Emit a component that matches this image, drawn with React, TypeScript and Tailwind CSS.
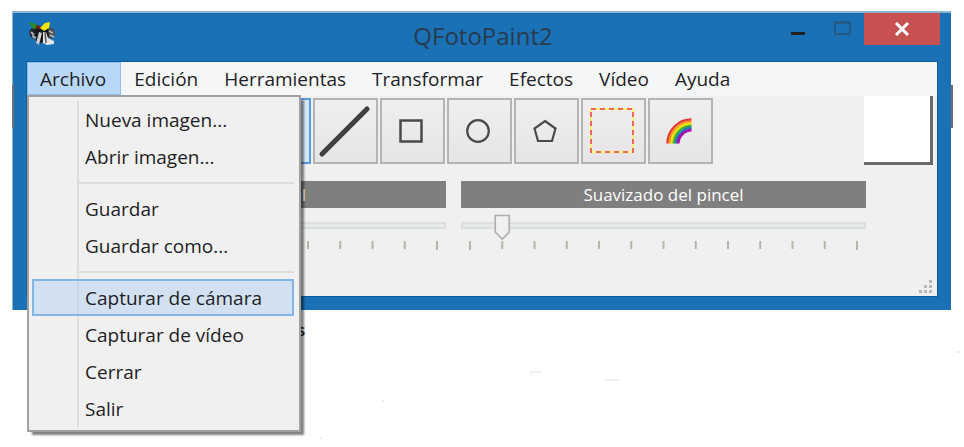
import { useState } from "react";
import type { ReactNode } from "react";

const menus = ["Edición", "Herramientas", "Transformar", "Efectos", "Vídeo", "Ayuda"];

const fileGroups = [
  ["Nueva imagen...", "Abrir imagen..."],
  ["Guardar", "Guardar como..."],
  ["Capturar de cámara", "Capturar de vídeo", "Cerrar", "Salir"],
];

function AppIcon() {
  return (
    <svg width="28" height="28" viewBox="0 0 28 28" aria-hidden="true">
      <ellipse cx="6" cy="12" rx="4.5" ry="5.5" fill="#20242a" />
      <ellipse cx="22" cy="12" rx="5" ry="5.5" fill="#4b4f55" />
      <path d="M8 7 L20 7 L21 15 L16 20 L10 24 L7 17 Z" fill="#15171a" />
      <path d="M11 11 L8 22 L11 24 L14 12 Z" fill="#c9ccd0" />
      <path d="M15 11 L15 22 L19 24 L26 23 L26 20 L20 17 L18 11 Z" fill="#e3e3e3" />
      <path d="M17 11 L18 22" stroke="#555" strokeWidth="1.5" />
      <path d="M3 11 L6 14 M4 15 L8 17" stroke="#a9adb2" strokeWidth="2" />
      <path d="M21 10 L25 12 M22 14 L26 16" stroke="#b5b8bc" strokeWidth="1.5" />
      <path d="M1 1 L8 3 L10 7 L5 8 Z" fill="#2f8a22" />
      <path d="M8 4 L13 5 L12 8 L8 7 Z" fill="#7a2018" />
      <path d="M12 7 L17 2 L22 1 L21 7 L16 10 Z" fill="#f2e50c" />
    </svg>
  );
}

function Tool({ label, active = false, children }: { label: string; active?: boolean; children?: ReactNode }) {
  return (
    <button
      type="button"
      aria-label={label}
      className={
        active
          ? "flex h-[66px] w-[65px] shrink-0 items-center justify-center border-2 border-[#569de5] bg-[#d5e8fa]"
          : "flex h-[66px] w-[65px] shrink-0 items-center justify-center border-2 border-[#b4b4b4] bg-linear-to-b from-[#efefef] to-[#e5e5e5] pr-[3px]"
      }
    >
      {children}
    </button>
  );
}

function BrushSlider({ id, label, initial }: { id: string; label: string; initial: number }) {
  const [value, setValue] = useState(initial);
  const ticks = Array.from({ length: 13 }, (_, i) => i);
  const at = (i: number) => 9 + (i * 387) / 12;
  return (
    <div className="w-[405px] shrink-0">
      <label htmlFor={id} className="block h-[27px] bg-[#7f7f7f] text-center text-[17px] leading-[27px] text-white">
        {label}
      </label>
      <div className="relative h-[44px]">
        <svg width="405" height="44" viewBox="0 0 405 44" aria-hidden="true">
          <rect x="1" y="15" width="403" height="5" fill="#e7eaea" stroke="#d6dada" strokeWidth="1.5" />
          {ticks.map((i) => (
            <rect key={i} x={at(i) - 1} y="33" width="2" height={i === 0 || i === 12 ? 9 : 8} fill="#b5b5ab" />
          ))}
          <path
            d="M-7 7.5 H7 V24 L0 31 L-7 24 Z"
            transform={`translate(${at(value)} 0)`}
            fill="#f0f0f0"
            stroke="#acacac"
            strokeWidth="1.6"
          />
        </svg>
        <input
          id={id}
          type="range"
          min={0}
          max={12}
          value={value}
          onChange={(e) => setValue(Number(e.target.value))}
          className="absolute inset-0 h-full w-full opacity-0"
        />
      </div>
    </div>
  );
}

function FileMenu() {
  return (
    <div
      role="menu"
      className="absolute top-[33px] left-0 z-10 w-[274px] border-2 border-[#a0a0a0] bg-[#f0f0f0] pt-1 pr-[5px] pb-[3px] pl-[3px] shadow-[4px_4px_2px_-1px_rgba(0,0,0,0.5)]"
    >
      <div className="relative">
        <div className="absolute inset-y-0 left-[45px] w-[2px] bg-[#dedede]" />
        {fileGroups.map((group, g) => (
          <div key={group[0]} className="relative">
            {g > 0 && (
              <div className="flex h-[15px] items-center pl-[47px]">
                <div className="h-[2px] w-full bg-[#dcdcdc]" />
              </div>
            )}
            {group.map((item) => (
              <button
                key={item}
                type="button"
                role="menuitem"
                className={
                  item === "Capturar de cámara"
                    ? "block h-[37px] w-full border-2 border-[#84b5ea] bg-[#8dc0f7]/30 pl-[51px] text-left leading-[34px]"
                    : "block h-[37px] w-full border-2 border-transparent pl-[51px] text-left leading-[34px]"
                }
              >
                {item}
              </button>
            ))}
          </div>
        ))}
      </div>
    </div>
  );
}

export default function App() {
  return (
    <main className="relative min-h-[447px] overflow-hidden bg-white pt-[11px] pr-[13px] pl-[12px] font-['Open_Sans','Noto_Sans',sans-serif] text-[19px] text-[#1e1e24]">
      <div className="relative border-t-2 border-l border-[#8fb4cf] bg-[#1a71b6]">
        <div className="absolute top-[72px] -right-[2px] h-[43px] w-[2px] bg-[#6d7177]" />
        <div className="absolute top-[72px] -left-[1px] h-[43px] w-[2px] bg-[#6d7177]" />
        <header className="flex h-[49px] items-start pr-[11px] pl-[15px]">
          <div className="w-[162px] pt-2">
            <AppIcon />
          </div>
          <h1 className="flex-1 text-center text-[24px] leading-[46px] text-[#283b4d]">QFotoPaint2</h1>
          <div className="flex h-8 w-[164px] justify-end">
            <button type="button" aria-label="Minimizar" className="flex w-[44px] items-end justify-center pb-[10px]">
              <span className="h-[3px] w-[14px] bg-[#222]" />
            </button>
            <button type="button" aria-label="Maximizar" className="flex w-[44px] items-center justify-center pb-[2px]">
              <span className="h-[14px] w-[17px] border-2 border-t-3 border-[#235a86]" />
            </button>
            <button type="button" aria-label="Cerrar ventana" className="flex w-[76px] items-center justify-center bg-[#c75050]">
              <svg width="16" height="14" viewBox="0 0 16 14" aria-hidden="true">
                <path d="M2 1 L14 13 M14 1 L2 13" stroke="#fff" strokeWidth="3" />
              </svg>
            </button>
          </div>
        </header>

        <div className="px-[14px] pb-[14px]">
          <div className="bg-[#f0f0f0] outline outline-[#0d5c9e]">
            <nav className="flex h-[34px] bg-[#f5f6f7]">
              <div className="relative">
                <button
                  type="button"
                  aria-haspopup="menu"
                  aria-expanded="true"
                  className="h-[33px] border border-[#8cc0f5] bg-[#b8d8f9] pt-[2px] pr-[14px] pl-3"
                >
                  Archivo
                </button>
                <FileMenu />
              </div>
              {menus.map((m) => (
                <button key={m} type="button" className="h-[33px] px-[13px] pt-[2px]">
                  {m}
                </button>
              ))}
            </nav>

            <div className="flex items-start justify-between pr-[4px] pl-[18px]">
              <div className="flex gap-[2px] pt-[2px]">
                <Tool label="Mover" />
                <Tool label="Punto" />
                <Tool label="Lápiz" />
                <Tool label="Pincel" active />
                <Tool label="Línea">
                  <svg width="54" height="54" viewBox="0 0 54 54" aria-hidden="true">
                    <path d="M5 50 L50 5" stroke="#404040" strokeWidth="5" strokeLinecap="round" />
                  </svg>
                </Tool>
                <Tool label="Rectángulo">
                  <svg width="24" height="24" viewBox="0 0 24 24" fill="none" aria-hidden="true">
                    <rect x="1.5" y="1.5" width="21" height="21" stroke="#4a4a4a" strokeWidth="2.5" />
                  </svg>
                </Tool>
                <Tool label="Elipse">
                  <svg width="24" height="24" viewBox="0 0 24 24" fill="none" aria-hidden="true">
                    <circle cx="12" cy="12" r="10.8" stroke="#4a4a4a" strokeWidth="2.2" />
                  </svg>
                </Tool>
                <Tool label="Polígono">
                  <svg width="24" height="24" viewBox="0 0 24 24" fill="none" aria-hidden="true">
                    <path d="M12 2 L22.5 9.5 L19 22 H5 L1.5 9.5 Z" stroke="#4a4a4a" strokeWidth="2.2" />
                  </svg>
                </Tool>
                <Tool label="Seleccionar">
                  <svg width="44" height="46" viewBox="0 0 44 46" fill="none" aria-hidden="true">
                    <rect x="1" y="1" width="42" height="43" stroke="#fdf66c" strokeWidth="2" />
                    <rect x="1" y="1" width="42" height="43" stroke="#f4655f" strokeWidth="2" strokeDasharray="5 4" />
                  </svg>
                </Tool>
                <Tool label="Arco iris">
                  <svg width="26" height="26" viewBox="0 0 26 26" fill="none" strokeWidth="2.4" aria-hidden="true">
                    <path d="M1.5 25.5 A24 24 0 0 1 25.5 1.5" stroke="#e53935" />
                    <path d="M3.6 25.5 A22 22 0 0 1 25.5 3.6" stroke="#f59a23" />
                    <path d="M5.7 25.5 A20 20 0 0 1 25.5 5.7" stroke="#f0e60c" />
                    <path d="M7.8 25.5 A18 18 0 0 1 25.5 7.8" stroke="#4cae2c" />
                    <path d="M9.8 25.5 A16 16 0 0 1 25.5 9.8" stroke="#1686b8" />
                    <path d="M12 25.5 A14 14 0 0 1 25.5 12" stroke="#a10fb0" strokeWidth="3" />
                  </svg>
                </Tool>
              </div>
              <button
                type="button"
                aria-label="Color del pincel"
                className="h-[69px] w-[69px] border-r-3 border-b-3 border-[#696969] bg-white"
              />
            </div>

            <div className="flex gap-[15px] pt-4 pl-[14px]">
              <BrushSlider id="radio" label="Radio del pincel" initial={3} />
              <BrushSlider id="suavizado" label="Suavizado del pincel" initial={1} />
            </div>

            <div className="flex h-[44px] items-end justify-end pr-[5px] pb-[2px]">
              <svg width="14" height="14" viewBox="0 0 14 14" fill="#b8b8b8" aria-hidden="true">
                <path d="M11 0h3v3h-3z M11 5h3v3h-3z M6 5h3v3h-3z M11 10h3v3h-3z M6 10h3v3h-3z M1 10h3v3h-3z" />
              </svg>
            </div>
          </div>
        </div>
      </div>
      <div className="flex items-start">
        <p className="pt-[7px] pl-[285px] text-[17px] leading-[26px] font-semibold">s</p>
        <svg width="660" height="130" viewBox="0 0 660 130" fill="#efefef" className="-mr-[13px] shrink-0" aria-hidden="true">
          <path d="M225 61h11v2h-9v2h-2z M300 69h15v2h-15z M77 90h2v2h-2z M15 127h2v2h-2z M649 41h6v2h-6z" />
        </svg>
      </div>
    </main>
  );
}
